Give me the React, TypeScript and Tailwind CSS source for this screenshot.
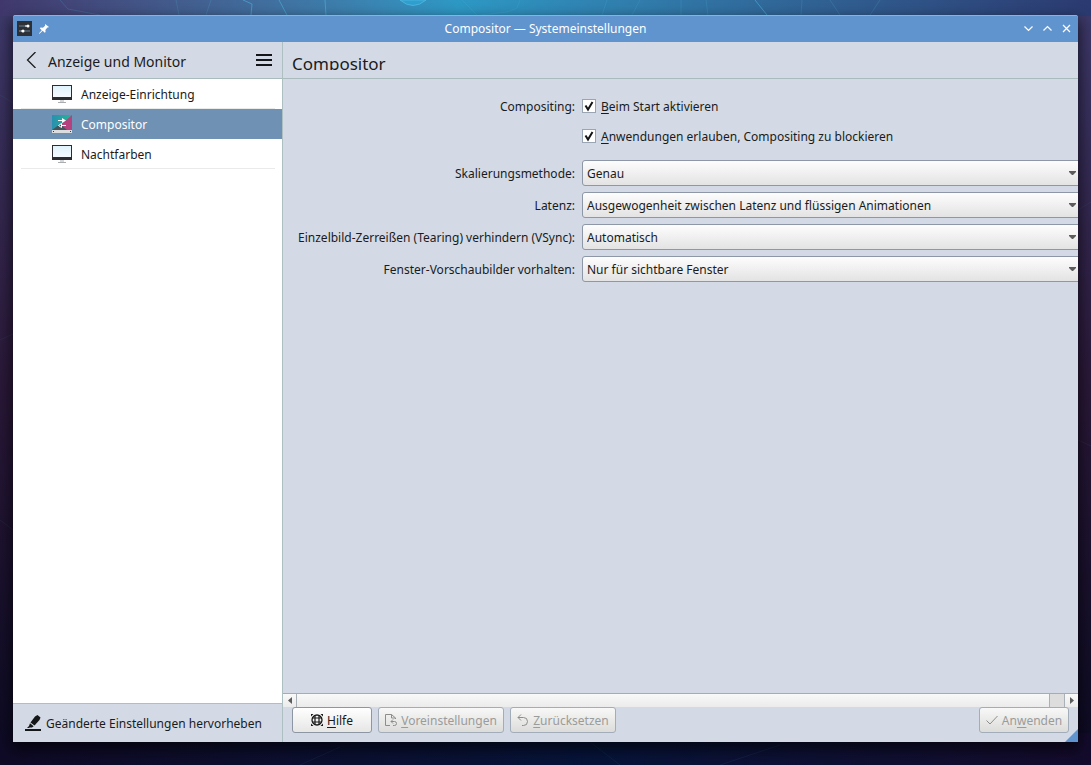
import type { ReactNode } from "react";

const modules = [
    { name: "Anzeige-Einrichtung", icon: <MonitorIcon />, active: false, divider: true },
    { name: "Compositor", icon: <CompositorIcon />, active: true, divider: false },
    { name: "Nachtfarben", icon: <MonitorIcon />, active: false, divider: true },
];

const selects = [
    { id: "scale", label: "Skalierungsmethode:", options: ["Genau", "Flüssig", "Einfach"] },
    { id: "latency", label: "Latenz:", options: ["Ausgewogenheit zwischen Latenz und flüssigen Animationen"] },
    { id: "vsync", label: "Einzelbild-Zerreißen (Tearing) verhindern (VSync):", options: ["Automatisch", "Nie"] },
    { id: "thumbs", label: "Fenster-Vorschaubilder vorhalten:", options: ["Nur für sichtbare Fenster", "Immer", "Nie"] },
];

function MonitorIcon() {
    return (
        <svg width="20" height="20" viewBox="0 0 20 20" aria-hidden="true">
            <defs>
                <linearGradient id="screen" x1="0" y1="0" x2="0" y2="1">
                    <stop offset="0" stopColor="#dff3fc" />
                    <stop offset="1" stopColor="#f5fbfe" />
                </linearGradient>
            </defs>
            <path d="M0 1h20v15H0z" fill="#2b2d30" />
            <path d="M1 2h18v11H1z" fill="url(#screen)" />
            <path d="M8 16h4v2H8z" fill="#d5d8da" />
            <path d="M6 18h8v1H6z" fill="#a9adb0" />
        </svg>
    );
}

function CompositorIcon() {
    return (
        <svg width="20" height="20" viewBox="0 0 20 20" aria-hidden="true">
            <defs>
                <linearGradient id="teal" x1="0" y1="0" x2="1" y2="0">
                    <stop offset="0" stopColor="#2a8fb0" />
                    <stop offset="1" stopColor="#1fb795" />
                </linearGradient>
            </defs>
            <path d="M0 1h20v15H0z" fill="url(#teal)" />
            <path d="M20 1v15h-6L9 11z" fill="#b5417f" />
            <path d="M0 16l8-6 7 6z" fill="#45535c" />
            <path d="M0 16h20v3H0z" fill="#dcdddf" />
            <path d="M1 17h1v1H1zM18 17h1v1h-1z" fill="#3a3d40" />
            <path d="M6 6h5v1H6zM10 4l4 2.500L10 9zM10 11h4v1h-4z" fill="#fff" />
            <path d="M9.500 9.500l-3 2 3 2z" fill="none" stroke="#fff" />
        </svg>
    );
}

function SettingsIcon() {
    return (
        <svg width="15" height="15" viewBox="0 0 15 15" aria-hidden="true">
            <path d="M0 0h15v15H0z" fill="#2d3136" />
            <path d="M2 4h8v2H2zM7 9h6v2H7z" fill="#4b5967" />
            <path d="M2 9h2v2H2z" fill="#5b6a79" />
            <path d="M8 4.500h3v1H8zM4 9.500h3v1H4z" fill="#fff" />
            <circle cx="11" cy="5" r="1.5" fill="#fff" />
            <circle cx="6" cy="10" r="1.5" fill="#fff" />
        </svg>
    );
}

function PinIcon() {
    return (
        <svg width="10" height="10" viewBox="0 0 10 10" aria-hidden="true">
            <path d="M6 0l4 3-1 .6-.6-.1-2 2.4.2 2.1-.9.8-2-2L.8 9.6 0 10l.3-.9 2.5-2.8-2-2 .8-.7 2.3.1 2.2-2L6 1z" fill="#fff" />
        </svg>
    );
}

function HelpIcon() {
    return (
        <svg width="12" height="12" viewBox="0 0 12 12" fill="none" stroke="#1a1a1a" aria-hidden="true">
            <circle cx="6" cy="6" r="5" strokeWidth="1.3" />
            <path d="M4 1v10M8 1v10M1 4h10M1 8h10" strokeWidth="1.2" />
            <path d="M0 0h2.500L0 2.500zM12 0v2.500L9.500 0zM0 12V9.500L2.500 12zM12 12H9.500L12 9.500z" fill="#1a1a1a" stroke="none" />
        </svg>
    );
}

function DefaultsIcon() {
    return (
        <svg width="12" height="12" viewBox="0 0 12 12" fill="none" stroke="#8d8d8b" aria-hidden="true">
            <path d="M5 11.500H.5V.5h6l4 3.500v1" />
            <path d="M6.500.5v3.500h4" />
            <path d="M8 5.500l-2 2 2 2M6 7.500h3.500a2 2 0 010 4H8" />
        </svg>
    );
}

function ResetIcon() {
    return (
        <svg width="12" height="12" viewBox="0 0 12 12" fill="none" stroke="#8d8d8b" aria-hidden="true">
            <path d="M4 .5l-3 3 3 3" />
            <path d="M1 3.500h5.500a4 4 0 010 8H5" />
        </svg>
    );
}

function ApplyIcon() {
    return (
        <svg width="12" height="12" viewBox="0 0 12 12" fill="none" stroke="#8d8d8b" aria-hidden="true">
            <path d="M.5 6.500l3.500 3.500 7.500-8" />
        </svg>
    );
}

function HighlightIcon() {
    return (
        <svg width="16" height="16" viewBox="0 0 16 16" fill="#141618" aria-hidden="true">
            <path d="M0 14h16v2H0z" />
            <path d="M12.500 0L15.500 2.500 14.500 5 9.500 10.500 5.500 7.500 10 1.500z" />
            <path d="M5 8.300l3.700 3L7 12.500H5L3.500 13H2l2-2z" />
        </svg>
    );
}

// Faint cell outlines of the wallpaper
function Wallpaper() {
    return (
        <svg className="absolute inset-0 h-full w-full" fill="none" stroke="#4fb4dd" strokeOpacity="0.2" aria-hidden="true">
            <path d="M60 0l8 9 32 6M176 0l3 15M211 0l-5 15M520 0l-3 8-10 4-27 3M462 0l15 15M607 0l-5 15M640 0l-8 15M681 0v15M706 0l2 15M802 0l-1 15M830 0l10 15M880 0l-10 15" />
            <path d="M243 0l9 4-1 11M279 0l8 15M325 0l1 15M755 0l12 15" strokeOpacity="0.6" />
            <path d="M400 0q13 11 26 0z" fill="#2f9fd0" strokeOpacity="0.9" />
            <path d="M0 95l13 8M0 340l13-6M0 520l13 10M1078 210l13-8M1078 440l13 6M300 765l40-18M590 742l30 23M720 765l60-20" strokeOpacity="0.08" />
        </svg>
    );
}

function Mnemonic({ children }: { children: ReactNode }) {
    return <span className="underline decoration-1 underline-offset-2">{children}</span>;
}

function PushButton({ icon, disabled = false, className = "", children }: { icon: ReactNode; disabled?: boolean; className?: string; children: ReactNode }) {
    return (
        <button
            type="button"
            disabled={disabled}
            className={`flex h-[26px] items-center justify-center gap-1 rounded-[3px] border bg-linear-to-b whitespace-nowrap ${disabled ? "border-[#a3adb9] from-[#f8f8f8] to-[#dcdcda] text-[#9a9b9b]" : "border-[#8d97a3] from-white to-[#e6e6e5] text-[#1a1a1a]"} ${className}`}
        >
            {icon}
            <span className="pt-0.5">{children}</span>
        </button>
    );
}

function CheckRow({ id, children }: { id: string; children: ReactNode }) {
    return (
        <div className="flex h-[18px] items-center gap-[5px]">
            <span className="relative flex">
                <input id={id} type="checkbox" defaultChecked className="peer size-3.5 appearance-none border border-[#9aa5b3] bg-white" />
                <svg className="pointer-events-none absolute inset-0 hidden peer-checked:block" width="14" height="14" viewBox="0 0 14 14" fill="none" stroke="#141414" strokeWidth="2" aria-hidden="true">
                    <path d="M3.500 6.500l2.500 4 4.500-7.500" />
                </svg>
            </span>
            <label htmlFor={id} className="pt-0.5 whitespace-nowrap">{children}</label>
        </div>
    );
}

function TitleBar() {
    return (
        <header className="grid h-[27px] shrink-0 grid-cols-[1fr_auto_1fr] items-center border-t border-[#84b3ea] bg-[#6094cf] px-1 pb-px text-white">
            <div className="flex items-center gap-[7px]">
                <SettingsIcon />
                <button type="button" aria-label="Auf allen Arbeitsflächen"><PinIcon /></button>
            </div>
            <h1>Compositor — Systemeinstellungen</h1>
            <div className="flex items-center justify-end gap-2.5 pr-[3px]">
                <button type="button" aria-label="Minimieren">
                    <svg width="9" height="9" viewBox="0 0 9 9" fill="none" stroke="#fff" strokeWidth="1.2" aria-hidden="true"><path d="M.5 2.500l4 4 4-4" /></svg>
                </button>
                <button type="button" aria-label="Maximieren">
                    <svg width="9" height="9" viewBox="0 0 9 9" fill="none" stroke="#fff" strokeWidth="1.2" aria-hidden="true"><path d="M.5 6.500l4-4 4 4" /></svg>
                </button>
                <button type="button" aria-label="Schließen">
                    <svg width="9" height="9" viewBox="0 0 9 9" fill="none" stroke="#fff" strokeWidth="1.2" aria-hidden="true"><path d="M1 1l7 7M8 1L1 8" /></svg>
                </button>
            </div>
        </header>
    );
}

function Sidebar() {
    return (
        <aside className="flex w-[270px] shrink-0 flex-col border-r border-[#aebfc1]">
            <div className="flex h-[37px] items-center border-b border-[#aabbbd] pr-2.5 pl-3">
                <button type="button" aria-label="Zurück">
                    <svg width="14" height="16" viewBox="0 0 14 16" fill="none" stroke="#1c1c1c" strokeWidth="1.3" aria-hidden="true"><path d="M10.500 0L2.500 8l8 8" /></svg>
                </button>
                <h2 className="flex-1 pt-1 pl-[9px] text-sm">Anzeige und Monitor</h2>
                <button type="button" aria-label="Menü">
                    <svg width="16" height="12" viewBox="0 0 16 12" fill="#141618" aria-hidden="true"><path d="M0 0h16v2H0zM0 5h16v2H0zM0 10h16v2H0z" /></svg>
                </button>
            </div>
            <nav className="flex-1 bg-white">
                {modules.map((m) => (
                    <a key={m.name} href="#" className={`block h-[30px] ${m.active ? "bg-[#6f91b4] text-white" : ""}`}>
                        <span className={`mr-[7px] ml-2 flex h-full items-center gap-[9px] border-b pl-[31px] ${m.divider ? "border-[#e9eaea]" : "border-transparent"}`}>
                            {m.icon}
                            <span className="pt-0.5">{m.name}</span>
                        </span>
                    </a>
                ))}
            </nav>
            <div className="flex h-[39px] items-center border-t border-[#aebfc1] pl-3">
                <button type="button" className="flex items-center gap-[5px] whitespace-nowrap">
                    <HighlightIcon />
                    <span className="pt-0.5">Geänderte Einstellungen hervorheben</span>
                </button>
            </div>
        </aside>
    );
}

function ScrollBar() {
    return (
        <div className="flex h-3.5 shrink-0 border-t border-[#a3adb3] bg-linear-to-b from-[#f9f9f9] to-[#ebebeb]">
            <button type="button" aria-label="Nach links" className="flex w-3.5 items-center justify-center border-r border-[#a9b1b6]">
                <svg width="4" height="7" viewBox="0 0 4 7" fill="#5c5c5c" aria-hidden="true"><path d="M4 0v7L0 3.500z" /></svg>
            </button>
            <div className="flex flex-1 justify-end">
                <div className="w-4 border-x border-[#a9b1b6] bg-[#dddddd]" />
            </div>
            <button type="button" aria-label="Nach rechts" className="flex w-[13px] items-center justify-center">
                <svg width="4" height="7" viewBox="0 0 4 7" fill="#5c5c5c" aria-hidden="true"><path d="M0 0v7l4-3.500z" /></svg>
            </button>
        </div>
    );
}

function Content() {
    return (
        <main className="relative flex min-w-0 flex-1 flex-col">
            <div className="h-[37px] shrink-0 border-b border-[#aabbbd] pt-2.5 pl-[9px]">
                <h2 className="h-[18px] overflow-hidden text-[17px] leading-6">Compositor</h2>
            </div>
            <form className="flex-1 overflow-hidden pt-[18px] pl-[9px]">
                <div className="grid grid-cols-[283px_1fr] items-center gap-x-[7px] gap-y-1.5">
                    <span className="self-start pt-px text-right">Compositing:</span>
                    <div className="mb-[9px] flex flex-col gap-3">
                        <CheckRow id="start"><Mnemonic>B</Mnemonic>eim Start aktivieren</CheckRow>
                        <CheckRow id="block"><Mnemonic>A</Mnemonic>nwendungen erlauben, Compositing zu blockieren</CheckRow>
                    </div>
                    {selects.map((s) => (
                        <div key={s.id} className="contents">
                            <label htmlFor={s.id} className="pt-0.5 text-right whitespace-nowrap">{s.label}</label>
                            <div className="relative -mr-2">
                                <select id={s.id} className="block h-[26px] w-full appearance-none rounded-[3px] border border-[#8d97a5] bg-linear-to-b from-[#fdfdfd] to-[#e3e3e3] pt-0.5 pl-1">
                                    {s.options.map((o) => <option key={o}>{o}</option>)}
                                </select>
                                <svg className="pointer-events-none absolute top-[11px] right-2.5" width="7" height="4" viewBox="0 0 7 4" fill="#5c5c5c" aria-hidden="true"><path d="M0 0h7v1L4 4H3L0 1z" /></svg>
                            </div>
                        </div>
                    ))}
                </div>
            </form>
            <ScrollBar />
            <div className="flex gap-1.5 pr-[9px] pb-[9px] pl-[9px]">
                <PushButton icon={<HelpIcon />} className="w-20"><Mnemonic>H</Mnemonic>ilfe</PushButton>
                <PushButton icon={<DefaultsIcon />} disabled className="w-[126px]"><Mnemonic>V</Mnemonic>oreinstellungen</PushButton>
                <PushButton icon={<ResetIcon />} disabled className="w-[106px]"><Mnemonic>Z</Mnemonic>urücksetzen</PushButton>
                <PushButton icon={<ApplyIcon />} disabled className="ml-auto w-[90px]">An<Mnemonic>w</Mnemonic>enden</PushButton>
            </div>
            {/* Resize grip */}
            <svg className="absolute right-0 bottom-0" width="13" height="13" viewBox="0 0 13 13" fill="#6094cf" aria-hidden="true"><path d="M13 0v13H0z" /></svg>
        </main>
    );
}

export default function App() {
    return (
        <div className="relative flex h-screen bg-linear-to-b from-[#3d3a6b] via-[#2a1838] via-50% to-[#0b0a22] px-[13px] pt-[15px] pb-[23px] font-['Noto_Sans',sans-serif] text-xs leading-[18px] text-[#1a1b1c]">
            <div className="absolute inset-x-0 top-0 h-4 bg-linear-to-r from-[#40386c] via-[#2d98c4] via-42% to-[#2b3a70]" />
            <div className="absolute inset-x-0 bottom-0 h-8 bg-linear-to-r from-[#0f0a26] via-[#06143a] via-55% to-[#140b2c]" />
            <Wallpaper />
            <div className="relative flex min-w-0 flex-1 flex-col overflow-hidden rounded-t-[3px] bg-[#d3dae5] shadow-[0_6px_14px_2px_rgba(0,0,0,0.6)]">
                <TitleBar />
                <div className="flex min-h-0 flex-1">
                    <Sidebar />
                    <Content />
                </div>
            </div>
        </div>
    );
}
